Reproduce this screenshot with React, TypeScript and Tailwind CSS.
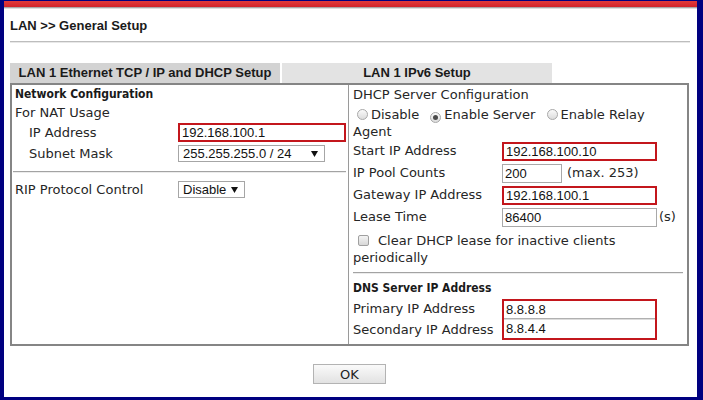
import React from "react";

const arial = "font-['Liberation_Sans',Arial,sans-serif]";
const verd = "font-['DejaVu_Sans',Verdana,sans-serif]";
const head = "font-['DejaVu_Sans_Condensed','Liberation_Sans',sans-serif] font-bold";

function Field({ value, width = "w-[155px]", red = false }: { value: string; width?: string; red?: boolean }) {
  return (
    <div
      className={`${width} h-[19px] bg-white ${arial} text-[13px] leading-[15px] text-[#111] pl-[2px] flex items-center ${
        red ? "border-2 border-[#c3161c]" : "border border-[#a9a9a9]"
      }`}
    >
      {value}
    </div>
  );
}

function Select({ value, width }: { value: string; width: string }) {
  return (
    <div
      className={`${width} h-[17px] bg-white border border-[#a6a6a6] ${arial} text-[13px] text-[#111] flex items-center justify-between pl-[4px] pr-[6px]`}
    >
      <span>{value}</span>
      <svg width="7" height="6" viewBox="0 0 7 6">
        <path d="M0 0h7L3.5 6z" fill="#111" />
      </svg>
    </div>
  );
}

function Radio({ checked = false }: { checked?: boolean }) {
  return (
    <span className="inline-flex w-[11px] h-[11px] rounded-full border border-[#a8a8a8] bg-gradient-to-b from-[#fafafa] to-[#dcdcdc] items-center justify-center align-[-1px] ml-[7px] mr-[3px]">
      {checked && <span className="w-[5px] h-[5px] rounded-full bg-[#4a4a4a]" />}
    </span>
  );
}

function Row({ label, children, h = "h-[22px]" }: { label: string; children: React.ReactNode; h?: string }) {
  return (
    <div className={`flex items-center ${h}`}>
      <div className="w-[149px]">{label}</div>
      {children}
    </div>
  );
}

function Divider({ className = "" }: { className?: string }) {
  return (
    <div className={className}>
      <div className="h-px bg-[#a3a3a3]" />
      <div className="h-px bg-[#ececec]" />
    </div>
  );
}

export default function App() {
  return (
    <div className="w-[703px] h-[400px] bg-[#000080] pt-px pl-[4px] pr-[6px] pb-[3px]">
      <div className="h-full bg-white flex flex-col">
        <div className="h-[6px] bg-gradient-to-b from-[#e03a3a] to-[#d1222a]" />
        <div className="h-px bg-[#a8a8a8]" />
        <div className="h-px bg-[#dedede]" />

        <div className="pl-[6px]">
          <div className={`mt-[7px] h-[20px] leading-[20px] ${arial} font-bold text-[13px] text-[#1a1a1a]`}>
            LAN &gt;&gt; General Setup
          </div>
          <div className="mt-[5px] w-[680px]">
            <div className="h-px bg-[#bdbdbd]" />
            <div className="h-px bg-[#e8e8e8]" />
          </div>

          <div className={`mt-[20px] flex h-[20px] ${arial} font-bold text-[13px] text-[#1a1a1a]`}>
            <div className="w-[270px] bg-[#d3d3d3] flex items-center justify-center">
              LAN 1 Ethernet TCP / IP and DHCP Setup
            </div>
            <div className="w-[270px] ml-[2px] bg-[#e3e3e3] flex items-center justify-center">
              LAN 1 IPv6 Setup
            </div>
          </div>

          <div className={`w-[679px] border-2 border-[#858585] flex ${verd} text-[13px] text-[#262626]`}>
            <div className="w-[337px] border-r border-[#9a9a9a] pl-[3px] pr-[2px]">
              <div className={`h-[19px] leading-[19px] ${head} text-[12px] text-[#1a1a1a]`}>Network Configuration</div>
              <div className="h-[18px] leading-[18px]">For NAT Usage</div>
              <div className="flex items-center h-[21px] pl-[14px]">
                <div className="w-[149px]">IP Address</div>
                <Field value="192.168.100.1" width="w-[168px]" red />
              </div>
              <div className="flex items-center h-[21px] pl-[14px]">
                <div className="w-[149px]">Subnet Mask</div>
                <Select value="255.255.255.0 / 24" width="w-[147px]" />
              </div>
              <Divider className="mt-[7px] -ml-[2px]" />
              <div className="flex items-center h-[19px] mt-[7px]">
                <div className="w-[163px]">RIP Protocol Control</div>
                <Select value="Disable" width="w-[67px]" />
              </div>
            </div>

            <div className="flex-1 pl-[4px] pr-[4px] pb-[4px]">
              <div className="h-[19px] leading-[19px]">DHCP Server Configuration</div>
              <div className="mt-[2px] leading-[17px] -ml-[3px]">
                <Radio />Disable <Radio checked />Enable Server <Radio />Enable Relay
                <br />
                <span className="ml-[3px]">Agent</span>
              </div>
              <Row label="Start IP Address">
                <Field value="192.168.100.10" red />
              </Row>
              <Row label="IP Pool Counts">
                <Field value="200" width="w-[60px]" />
                <span className="ml-[5px]">(max. 253)</span>
              </Row>
              <Row label="Gateway IP Address">
                <Field value="192.168.100.1" red />
              </Row>
              <Row label="Lease Time">
                <Field value="86400" width="w-[155px]" />
                <span className="ml-[2px]">(s)</span>
              </Row>
              <div className="mt-[4px] leading-[17px]">
                <span className="inline-block w-[11px] h-[11px] rounded-[2px] border border-[#a0a0a0] bg-gradient-to-b from-[#f4f4f4] to-[#d8d8d8] align-[-1px] ml-[5px] mr-[9px]" />
                Clear DHCP lease for inactive clients
                <br />
                periodically
              </div>
              <Divider className="mt-[6px]" />
              <div className={`mt-[5px] h-[19px] leading-[19px] ${head} text-[12px] text-[#1a1a1a]`}>
                DNS Server IP Address
              </div>
              <div className="flex">
                <div className="w-[149px]">
                  <div className="h-[21px] flex items-center">Primary IP Address</div>
                  <div className="h-[21px] flex items-center">Secondary IP Address</div>
                </div>
                <div className={`w-[155px] mt-[1px] h-[41px] border-2 border-[#c3161c] ${arial} text-[13px] text-[#111]`}>
                  <div className="h-[18px] pl-[2px] flex items-center border-b border-[#b0b0b0]">8.8.8.8</div>
                  <div className="h-[18px] pl-[2px] flex items-center border-t border-[#dcdcdc]">8.8.4.4</div>
                </div>
              </div>
            </div>
          </div>

          <div className="w-[679px] flex justify-center mt-[18px]">
            <button
              className={`w-[73px] h-[20px] border border-[#b3b3b3] bg-gradient-to-b from-[#fafafa] to-[#e2e2e2] ${verd} text-[13px] text-[#222] leading-none`}
            >
              OK
            </button>
          </div>
        </div>
      </div>
    </div>
  );
}
